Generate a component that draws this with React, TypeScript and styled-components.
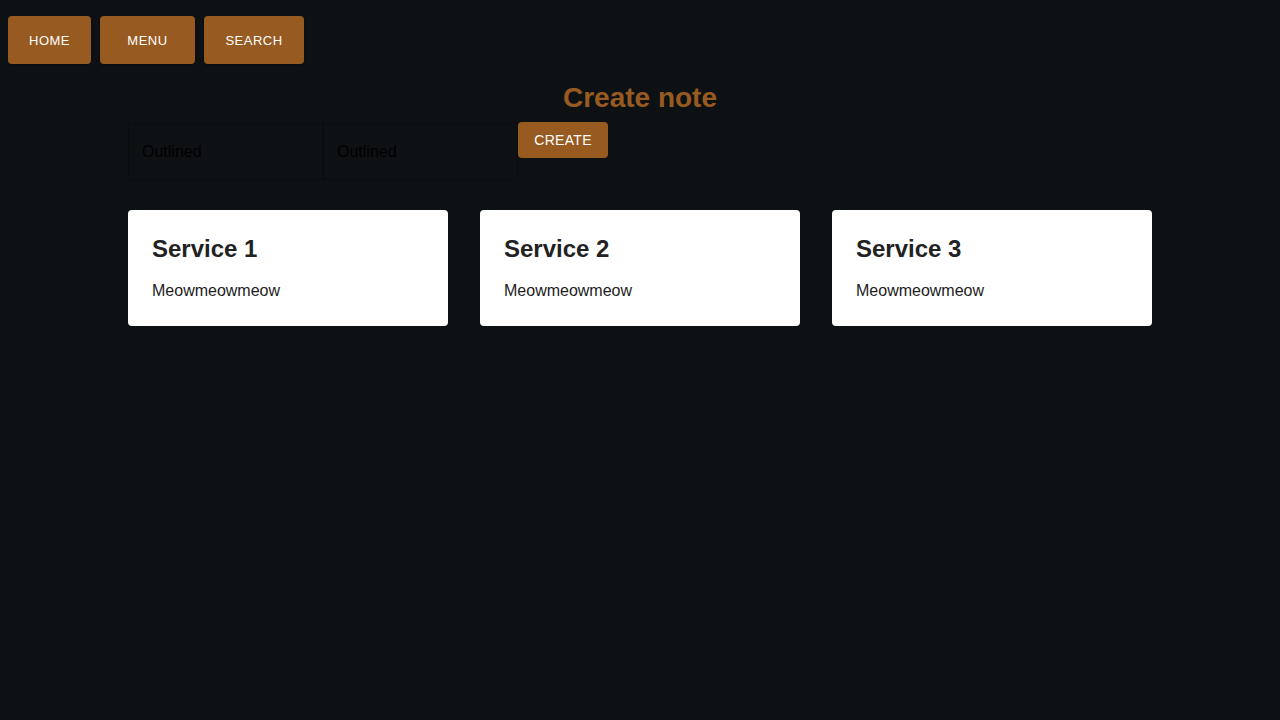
import { createGlobalStyle } from "styled-components";
import styled from "styled-components";

const services = [
  { id: 1, title: "Service 1", text: "Meowmeowmeow" },
  { id: 2, title: "Service 2", text: "Meowmeowmeow" },
  { id: 3, title: "Service 3", text: "Meowmeowmeow" },
];

const App = () => {
  return (
    <>
      <GlobalStyle />
      <Nav>
        <NavButton>Home</NavButton>
        <NavButton $width={95}>Menu</NavButton>
        <NavButton $width={100}>Search</NavButton>
      </Nav>
      <Main>
        <Title>Create note</Title>
        <Form onSubmit={(e) => e.preventDefault()}>
          <Field placeholder="Outlined" />
          <Field placeholder="Outlined" />
          <CreateButton type="submit">Create</CreateButton>
        </Form>
        <CardGrid>
          {services.map((s) => (
            <Card key={s.id}>
              <CardTitle>{s.title}</CardTitle>
              <CardText>{s.text}</CardText>
            </Card>
          ))}
        </CardGrid>
      </Main>
    </>
  );
};

export default App;

const GlobalStyle = createGlobalStyle`
  html, body {
    background: #0e1114;
  }

  body {
    margin: 8px;
    font-family: "Liberation Sans", Arial, sans-serif;
  }
`;

const Nav = styled.nav`
  display: flex;
  gap: 9px;

  padding-top: 8px;
`;

const NavButton = styled.button<{ $width?: number }>`
  height: 48px;
  min-width: ${({ $width }) => ($width ? `${$width}px` : "auto")};

  padding: 0 21px;
  border: none;
  border-radius: 4px;
  background: #975a20;
  box-shadow: 0 1px 2px rgba(0, 0, 0, 0.4);

  color: #fff;
  font-family: inherit;
  font-size: 13px;
  font-weight: 500;
  letter-spacing: 0.5px;
  text-transform: uppercase;
`;

const Main = styled.main`
  width: 1024px;
  margin: 0 auto;
`;

const Title = styled.h1`
  margin: 17px 0 7px;

  color: #975a20;
  text-align: center;
  font-size: 28px;
  font-weight: 700;
  line-height: 34px;
`;

const Form = styled.form`
  display: flex;
  align-items: flex-start;
`;

const Field = styled.input`
  box-sizing: border-box;
  width: 195px;
  height: 57px;
  margin-top: 1px;

  padding: 0 13px;
  border: 1px solid #0a0c0e;
  background: transparent;

  font-family: inherit;
  font-size: 16px;

  &::placeholder {
    color: #000;
  }

  &:focus {
    outline: none;
  }
`;

const CreateButton = styled.button`
  width: 90px;
  height: 36px;

  border: none;
  border-radius: 4px;
  background: #975a20;

  color: #fff;
  font-family: inherit;
  font-size: 14px;
  font-weight: 500;
  letter-spacing: 0.3px;
  text-transform: uppercase;
`;

const CardGrid = styled.div`
  display: grid;
  grid-template-columns: repeat(3, 320px);
  gap: 32px;

  margin-top: 30px;
`;

const Card = styled.div`
  box-sizing: border-box;
  height: 116px;

  padding: 23px 24px;
  border-radius: 4px;
  background: #fff;
`;

const CardTitle = styled.h2`
  margin: 0;

  color: #222;
  font-size: 24px;
  font-weight: 700;
  line-height: 32px;
`;

const CardText = styled.p`
  margin: 16px 0 0;

  color: #222;
  font-size: 16px;
  line-height: 20px;
`;
